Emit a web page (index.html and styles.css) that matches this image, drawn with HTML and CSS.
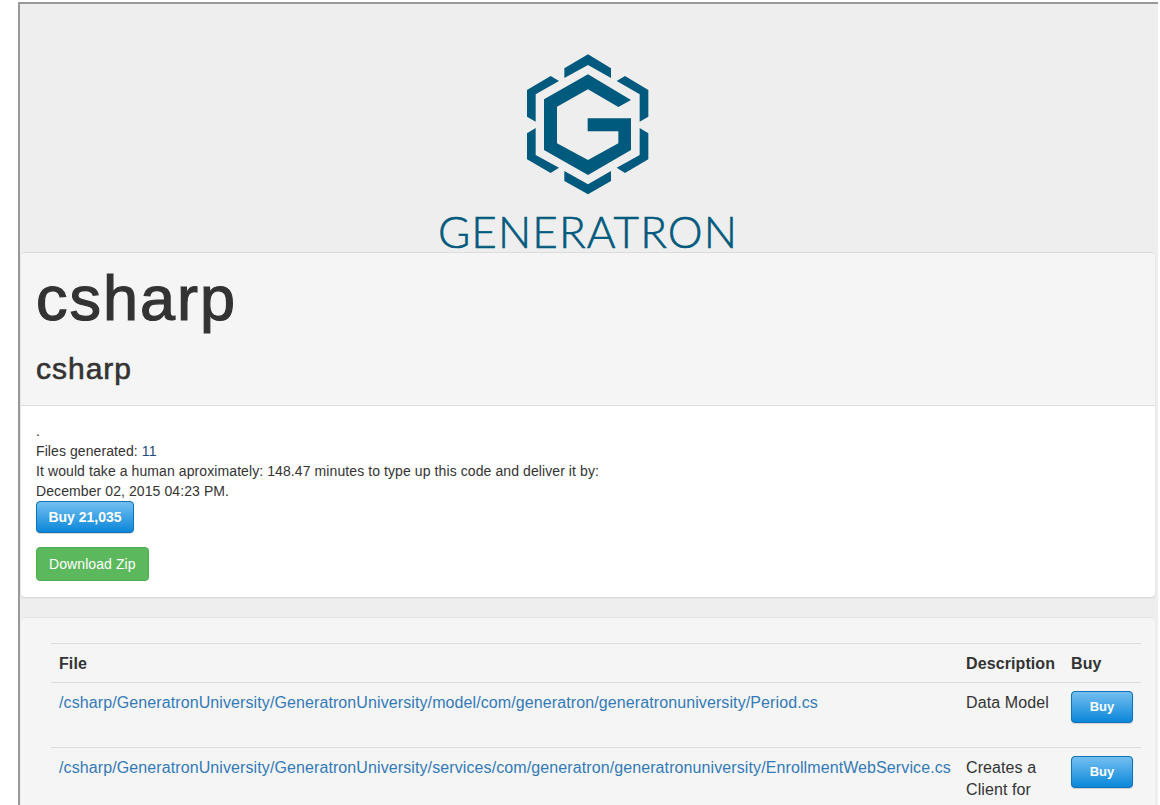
FILE: index.html
```html
<!DOCTYPE html>
<html lang="en">
<head>
    <meta charset="UTF-8">
    <title>csharp - Generatron</title>
    <link rel="stylesheet" href="styles.css">
</head>
<body>
    <div class="frame">
        <div class="brand">
            <svg class="brand-mark" viewBox="0 0 405 450" width="135" height="150">
                <polygon points="133,55 204,13 273,55 273,84 204,45 133,84"/>
                <polygon points="21,120 92,78 117,93 47,133 47,215 21,200"/>
                <polygon points="290,93 315,78 385,120 385,200 359,215 359,133"/>
                <polygon points="21,250 47,234 47,315 117,353 92,369 21,328"/>
                <polygon points="385,250 359,234 359,315 290,353 315,369 385,328"/>
                <polygon points="133,363 204,403 273,363 273,393 204,433 133,393"/>
                <polygon points="204,73 333,150 295,171 204,118 111,170 111,280 204,330 295,280 295,244 203,244 203,205 333,205 333,300 204,375 72,300 72,148"/>
            </svg>
            <div class="brand-name">GENERATRON</div>
        </div>

        <div class="panel">
            <div class="panel-head">
                <h1>csharp</h1>
                <h2>csharp</h2>
            </div>
            <div class="panel-body">
                <div>.</div>
                <div>Files generated: <span class="count">11</span></div>
                <div>It would take a human aproximately: 148.47 minutes to type up this code and deliver it by:</div>
                <div>December 02, 2015 04:23 PM.</div>
                <a class="btn btn-blue btn-price" href="#">Buy 21,035</a>
                <a class="btn btn-green" href="#">Download Zip</a>
            </div>
        </div>

        <div class="well">
            <table class="files">
                <colgroup>
                    <col class="col-file">
                    <col class="col-desc">
                    <col class="col-buy">
                </colgroup>
                <thead>
                    <tr>
                        <th>File</th>
                        <th>Description</th>
                        <th>Buy</th>
                    </tr>
                </thead>
                <tbody>
                    <tr>
                        <td><a href="#">/csharp/GeneratronUniversity/GeneratronUniversity/model/com/generatron/generatronuniversity/Period.cs</a></td>
                        <td>Data Model</td>
                        <td class="cell-buy"><a class="btn btn-blue btn-row" href="#">Buy</a></td>
                    </tr>
                    <tr>
                        <td><a href="#">/csharp/GeneratronUniversity/GeneratronUniversity/services/com/generatron/generatronuniversity/EnrollmentWebService.cs</a></td>
                        <td>Creates a Client for</td>
                        <td class="cell-buy"><a class="btn btn-blue btn-row" href="#">Buy</a></td>
                    </tr>
                </tbody>
            </table>
        </div>
    </div>
</body>
</html>
```

FILE: styles.css
```css
html, body {
    margin: 0;
    padding: 0;
    height: 100%;
    overflow: hidden;
    background-color: #fff;
}
body {
    font-family: "Liberation Sans", Arial, sans-serif;
    font-size: 14px;
    line-height: 20px;
    letter-spacing: 0.09px;
    color: #333;
}
a {
    color: #337ab7;
    text-decoration: none;
}
.frame {
    box-sizing: border-box;
    height: 803px;
    margin: 2px 2px 0 18px;
    padding: 0 3px 0 1px;
    overflow: hidden;
    background-color: #eee;
    border-top: 2px solid #999;
    border-left: 2px solid #999;
}
.brand {
    height: 248px;
    padding-top: 46px;
    box-sizing: border-box;
    display: flex;
    flex-direction: column;
    align-items: center;
}
.brand-mark {
    flex: none;
    margin-right: 1px;
    fill: #005a7d;
}
.brand-name {
    font-family: Lato, sans-serif;
    font-weight: 300;
    font-size: 44px;
    line-height: 40px;
    letter-spacing: 1.1px;
    -webkit-text-stroke: 0.6px #005a7d;
    color: #005a7d;
    margin-top: 11px;
}
.panel {
    background-color: #fff;
    border-top: 1px solid #ddd;
    border-radius: 4px;
    box-shadow: 0 1px 2px rgba(0, 0, 0, 0.12);
    margin-bottom: 20px;
}
.panel-head {
    height: 153px;
    box-sizing: border-box;
    padding: 11px 15px 0;
    background-color: #f5f5f5;
    border-bottom: 1px solid #ddd;
    border-radius: 4px 4px 0 0;
}
h1 {
    font-size: 63px;
    font-weight: 500;
    line-height: 69px;
    letter-spacing: 2px;
    -webkit-text-stroke: 1.2px #333;
    margin: 0;
}
h2 {
    font-size: 30px;
    font-weight: 500;
    line-height: 33px;
    letter-spacing: 1px;
    -webkit-text-stroke: 0.6px #333;
    margin: 19px 0 0;
}
.panel-body {
    padding: 15px 15px 16px;
}
.count {
    color: #1c4a7a;
}
.btn {
    display: block;
    box-sizing: border-box;
    width: max-content;
    text-align: center;
    font-size: 14px;
    border-radius: 4px;
    color: #fff;
}
.btn-blue {
    font-weight: bold;
    letter-spacing: 0;
    background-image: linear-gradient(to bottom, #74bff1, #0a87d9);
    background-color: #0a87d9;
    border: 1px solid #1272b4;
    box-shadow: 0 1px 1px rgba(0, 0, 0, 0.15);
    line-height: 30px;
}
.btn-price {
    width: 98px;
    height: 32px;
    margin-bottom: 14px;
}
.btn-green {
    background-color: #5cb85c;
    border: 1px solid #4cae4c;
    padding: 6px 12px;
}
.btn-row {
    width: 62px;
    height: 32px;
    margin-bottom: 16px;
    font-size: 13px;
}
.well {
    background-color: #f5f5f5;
    border-top: 1px solid #e3e3e3;
    border-radius: 4px;
    box-shadow: 0 1px 1px rgba(0, 0, 0, 0.05);
    padding: 25px 14px 20px 30px;
}
.files {
    width: 1090px;
    table-layout: fixed;
    border-collapse: collapse;
    font-size: 16px;
    line-height: 22px;
    letter-spacing: 0.1px;
}
.col-file {
    width: 907px;
}
.col-desc {
    width: 105px;
}
.col-buy {
    width: 78px;
}
.files th, .files td {
    padding: 9px 8px 7px;
    text-align: left;
    vertical-align: top;
    border-top: 1px solid #ddd;
}
.files .cell-buy {
    padding: 8px;
}
```
